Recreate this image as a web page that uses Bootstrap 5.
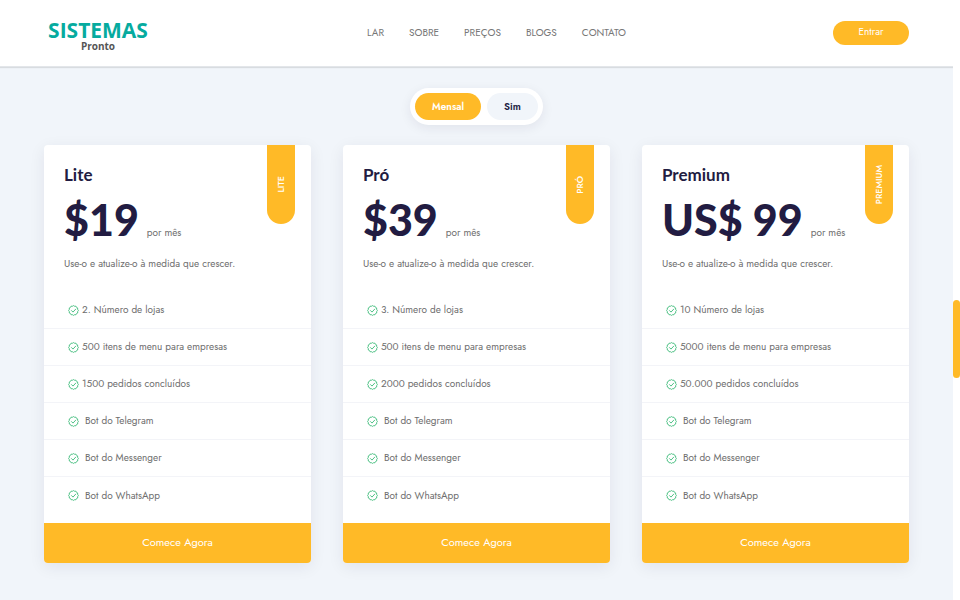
<!DOCTYPE html>
<html lang="pt">
<head>
<meta charset="utf-8">
<meta name="viewport" content="width=device-width, initial-scale=1">
<title>Sistemas Pronto – Preços</title>
<link href="https://cdn.jsdelivr.net/npm/bootstrap@5.3.0/dist/css/bootstrap.min.css" rel="stylesheet">
<style>
:root { --amber: #ffba27; --ink: #221c42; --soft: #f1f5fa; --body-text: #6e6e6e; }
body { font-family: Jost, Lato, sans-serif; font-size: 10px; line-height: 16px; color: var(--body-text); background: var(--soft); }
.site-header { height: 67px; padding: 0 44px 1px; border-bottom: 1px solid #e3e6ea; box-shadow: 0 1px 1px #0000001a; }
.brand { width: 108px; padding-top: 5px; text-align: center; text-decoration: none; font-family: "Open Sans", sans-serif; font-weight: 700; }
.brand-top { font-size: 21px; line-height: 22px; color: #06ab9f; }
.brand-sub { font-size: 10px; line-height: 10px; color: #555; }
.menu { gap: 25px; padding-left: 8px; }
.menu a { color: #777; text-decoration: none; }
.pill { border: 0; border-radius: 20px; font-size: 10px; line-height: 16px; }
.pill-login { width: 76px; padding: 3px 0 5px; color: #fff; background: var(--amber); }
.switcher-bar { padding: 21px 0 20px; }
.switcher { gap: 6px; padding: 5px; border-radius: 20px; background: #fff; box-shadow: 0 3px 12px #221c4214; }
.switcher .pill { padding: 6px 17px 5px; color: var(--ink); background: var(--soft); font-weight: 600; }
.switcher .pill.active { color: #fff; background: var(--amber); }
.plans { padding: 0 44px 36px; }
.plans .row { --bs-gutter-x: 32px; --bs-gutter-y: 32px; }
.plan { border: 0; border-radius: 4px; box-shadow: 0 4px 16px #221c4214; --bs-card-bg: #fff; color: var(--body-text); }
.plan-head { padding: 18px 20px 20px; }
.plan-name { margin: 0 0 9px; font: 700 17px/24px Lato, sans-serif; color: var(--ink); }
.plan-price { gap: 8px; margin-bottom: 12px; }
.plan-price strong { font: 900 43px/48px Lato, sans-serif; color: var(--ink); }
.plan-tag { position: absolute; top: 0; right: 16px; width: 28px; height: 79px; border-radius: 0 0 14px 14px; color: #fff; background: var(--amber); font-size: 9px; font-weight: 500; }
.plan-tag span { writing-mode: vertical-rl; transform: rotate(180deg); }
.features { padding-bottom: 9px; }
.features li { gap: 3px; height: 37px; padding: 0 24px; border-bottom: 1px solid #f3f4f8; }
.features li:last-child { border-bottom: 0; }
.features li.bot { gap: 6px; }
.tick { width: 11px; height: 11px; fill: none; stroke: #3cba78; }
.plan-cta { padding: 11px 12px 13px; border: 0; border-radius: 0 0 4px 4px; color: #fff; background: var(--amber); font-size: 11px; }
.rail { position: relative; width: 7px; background: #fff; }
.rail-thumb { position: absolute; top: 50%; width: 7px; height: 78px; border-radius: 4px; background: var(--amber); }
</style>
</head>
<body>
<svg class="d-none" xmlns="http://www.w3.org/2000/svg">
  <symbol id="tick" viewBox="0 0 22 22">
    <path stroke-width="1.8" stroke-linejoin="round" d="M11 1.2l2.2 1.3 2.6-.1 1.2 2.3 2.3 1.2-.1 2.7L20.8 11l-1.5 2.3.1 2.7-2.4 1.2-1.2 2.3-2.6-.1-2.2 1.4-2.2-1.4-2.6.1L5 17.2l-2.4-1.2.1-2.7L1.2 11l1.5-2.4-.1-2.7L5 4.7l1.2-2.3 2.6.1z"/>
    <path stroke-width="1.8" stroke-linecap="round" stroke-linejoin="round" d="M7 11.2l3 3 5.5-6"/>
  </symbol>
</svg>
<div class="d-flex min-vh-100">
  <div class="flex-grow-1">
    <header class="site-header bg-white d-flex align-items-center justify-content-between">
      <a class="brand d-flex flex-column" href="#"><span class="brand-top">SISTEMAS</span><span class="brand-sub">Pronto</span></a>
      <nav class="menu d-flex" aria-label="Principal">
        <a href="#">LAR</a><a href="#">SOBRE</a><a href="#">PREÇOS</a><a href="#">BLOGS</a><a href="#">CONTATO</a>
      </nav>
      <button class="pill pill-login" type="button">Entrar</button>
    </header>
    <main>
      <div class="switcher-bar d-flex justify-content-center">
        <div class="switcher d-flex">
          <button class="pill active" type="button">Mensal</button>
          <button class="pill" type="button">Sim</button>
        </div>
      </div>
      <section class="plans">
        <div class="row">
          <div class="col-4">
            <article class="plan card">
              <div class="plan-head">
                <h2 class="plan-name">Lite</h2>
                <div class="plan-price d-flex align-items-baseline"><strong>$19</strong><span>por mês</span></div>
                <p class="mb-0">Use-o e atualize-o à medida que crescer.</p>
              </div>
              <div class="plan-tag d-flex align-items-center justify-content-center"><span>LITE</span></div>
              <ul class="features list-unstyled mb-0">
                <li class="d-flex align-items-center"><svg class="tick"><use href="#tick"/></svg>2. Número de lojas</li>
                <li class="d-flex align-items-center"><svg class="tick"><use href="#tick"/></svg>500 itens de menu para empresas</li>
                <li class="d-flex align-items-center"><svg class="tick"><use href="#tick"/></svg>1500 pedidos concluídos</li>
                <li class="bot d-flex align-items-center"><svg class="tick"><use href="#tick"/></svg>Bot do Telegram</li>
                <li class="bot d-flex align-items-center"><svg class="tick"><use href="#tick"/></svg>Bot do Messenger</li>
                <li class="bot d-flex align-items-center"><svg class="tick"><use href="#tick"/></svg>Bot do WhatsApp</li>
              </ul>
              <button class="plan-cta" type="button">Comece Agora</button>
            </article>
          </div>
          <div class="col-4">
            <article class="plan card">
              <div class="plan-head">
                <h2 class="plan-name">Pró</h2>
                <div class="plan-price d-flex align-items-baseline"><strong>$39</strong><span>por mês</span></div>
                <p class="mb-0">Use-o e atualize-o à medida que crescer.</p>
              </div>
              <div class="plan-tag d-flex align-items-center justify-content-center"><span>PRÓ</span></div>
              <ul class="features list-unstyled mb-0">
                <li class="d-flex align-items-center"><svg class="tick"><use href="#tick"/></svg>3. Número de lojas</li>
                <li class="d-flex align-items-center"><svg class="tick"><use href="#tick"/></svg>500 itens de menu para empresas</li>
                <li class="d-flex align-items-center"><svg class="tick"><use href="#tick"/></svg>2000 pedidos concluídos</li>
                <li class="bot d-flex align-items-center"><svg class="tick"><use href="#tick"/></svg>Bot do Telegram</li>
                <li class="bot d-flex align-items-center"><svg class="tick"><use href="#tick"/></svg>Bot do Messenger</li>
                <li class="bot d-flex align-items-center"><svg class="tick"><use href="#tick"/></svg>Bot do WhatsApp</li>
              </ul>
              <button class="plan-cta" type="button">Comece Agora</button>
            </article>
          </div>
          <div class="col-4">
            <article class="plan card">
              <div class="plan-head">
                <h2 class="plan-name">Premium</h2>
                <div class="plan-price d-flex align-items-baseline"><strong>US$ 99</strong><span>por mês</span></div>
                <p class="mb-0">Use-o e atualize-o à medida que crescer.</p>
              </div>
              <div class="plan-tag d-flex align-items-center justify-content-center"><span>PREMIUM</span></div>
              <ul class="features list-unstyled mb-0">
                <li class="d-flex align-items-center"><svg class="tick"><use href="#tick"/></svg>10 Número de lojas</li>
                <li class="d-flex align-items-center"><svg class="tick"><use href="#tick"/></svg>5000 itens de menu para empresas</li>
                <li class="d-flex align-items-center"><svg class="tick"><use href="#tick"/></svg>50.000 pedidos concluídos</li>
                <li class="bot d-flex align-items-center"><svg class="tick"><use href="#tick"/></svg>Bot do Telegram</li>
                <li class="bot d-flex align-items-center"><svg class="tick"><use href="#tick"/></svg>Bot do Messenger</li>
                <li class="bot d-flex align-items-center"><svg class="tick"><use href="#tick"/></svg>Bot do WhatsApp</li>
              </ul>
              <button class="plan-cta" type="button">Comece Agora</button>
            </article>
          </div>
        </div>
      </section>
    </main>
  </div>
  <div class="rail"><div class="rail-thumb"></div></div>
</div>
<script src="https://cdn.jsdelivr.net/npm/bootstrap@5.3.0/dist/js/bootstrap.bundle.min.js"></script>
</body>
</html>
